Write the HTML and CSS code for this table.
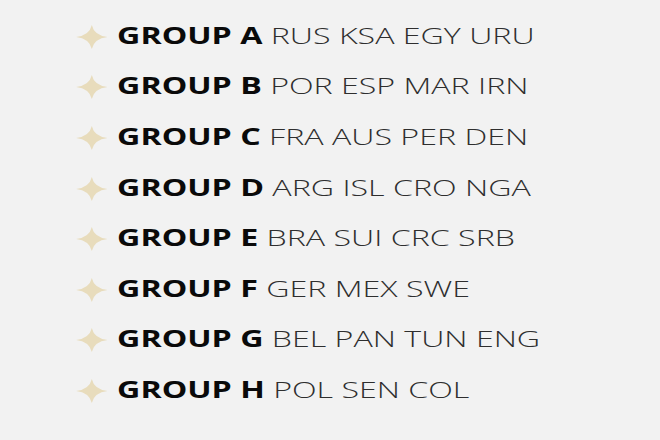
FILE: index.html
```html
<!DOCTYPE html>
<html>
<head>
<meta charset="utf-8">
<link rel="stylesheet" href="styles.css">
</head>
<body>
<ul class="groups">
  <li class="group"><svg class="star" viewBox="0 0 22 24"><path d="M11 0 Q12.6 10.4 22 12 Q12.6 13.6 11 24 Q9.4 13.6 0 12 Q9.4 10.4 11 0Z"/></svg><span class="label"><b class="name">GROUP A</b> <span class="teams">RUS KSA EGY URU</span></span></li>
  <li class="group"><svg class="star" viewBox="0 0 22 24"><path d="M11 0 Q12.6 10.4 22 12 Q12.6 13.6 11 24 Q9.4 13.6 0 12 Q9.4 10.4 11 0Z"/></svg><span class="label"><b class="name">GROUP B</b> <span class="teams">POR ESP MAR IRN</span></span></li>
  <li class="group"><svg class="star" viewBox="0 0 22 24"><path d="M11 0 Q12.6 10.4 22 12 Q12.6 13.6 11 24 Q9.4 13.6 0 12 Q9.4 10.4 11 0Z"/></svg><span class="label"><b class="name">GROUP C</b> <span class="teams">FRA AUS PER DEN</span></span></li>
  <li class="group"><svg class="star" viewBox="0 0 22 24"><path d="M11 0 Q12.6 10.4 22 12 Q12.6 13.6 11 24 Q9.4 13.6 0 12 Q9.4 10.4 11 0Z"/></svg><span class="label"><b class="name">GROUP D</b> <span class="teams">ARG ISL CRO NGA</span></span></li>
  <li class="group"><svg class="star" viewBox="0 0 22 24"><path d="M11 0 Q12.6 10.4 22 12 Q12.6 13.6 11 24 Q9.4 13.6 0 12 Q9.4 10.4 11 0Z"/></svg><span class="label"><b class="name">GROUP E</b> <span class="teams">BRA SUI CRC SRB</span></span></li>
  <li class="group"><svg class="star" viewBox="0 0 22 24"><path d="M11 0 Q12.6 10.4 22 12 Q12.6 13.6 11 24 Q9.4 13.6 0 12 Q9.4 10.4 11 0Z"/></svg><span class="label"><b class="name">GROUP F</b> <span class="teams">GER MEX SWE</span></span></li>
  <li class="group"><svg class="star" viewBox="0 0 22 24"><path d="M11 0 Q12.6 10.4 22 12 Q12.6 13.6 11 24 Q9.4 13.6 0 12 Q9.4 10.4 11 0Z"/></svg><span class="label"><b class="name">GROUP G</b> <span class="teams">BEL PAN TUN ENG</span></span></li>
  <li class="group"><svg class="star" viewBox="0 0 22 24"><path d="M11 0 Q12.6 10.4 22 12 Q12.6 13.6 11 24 Q9.4 13.6 0 12 Q9.4 10.4 11 0Z"/></svg><span class="label"><b class="name">GROUP H</b> <span class="teams">POL SEN COL</span></span></li>
</ul>
</body>
</html>
```
FILE: styles.css
```css
html, body {
  margin: 0;
  padding: 0;
  background: #f2f2f2;
}
body {
  font-family: "Open Sans", "Liberation Sans", sans-serif;
}
.groups {
  list-style: none;
  margin: 0;
  width: 400px;
  padding: 10px 0 0 52.5px;
  transform: scaleX(1.43);
  transform-origin: 0 0;
}
.group {
  display: flex;
  align-items: center;
  height: 50.6px;
  font-size: 22.5px;
  white-space: nowrap;
}
.star {
  width: 22.4px;
  height: 24px;
  margin-top: 3px;
  margin-right: 7px;
  fill: #e8dcbc;
  flex: none;
}
.name {
  font-weight: 700;
  color: #0a0a0a;
}
.teams {
  font-weight: 300;
  color: #2e2e2e;
}
```
